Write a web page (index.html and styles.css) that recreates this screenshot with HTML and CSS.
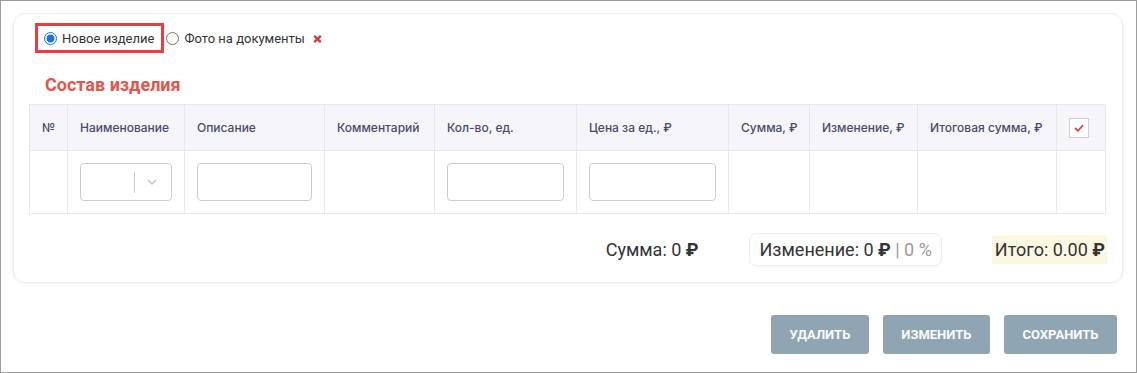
FILE: index.html
```html
<!DOCTYPE html>
<html lang="ru">
<head>
<meta charset="utf-8">
<link rel="stylesheet" href="styles.css">
</head>
<body>
<div class="frame">
  <div class="card">
    <div class="radios">
      <label class="radio radio-active"><input type="radio" name="kind" checked><span>Новое изделие</span></label>
      <label class="radio"><input type="radio" name="kind"><span>Фото на документы</span></label>
      <svg class="remove" width="9" height="8" viewBox="0 0 9 8"><path d="M1.2 0.8 L7.8 7.2 M7.8 0.8 L1.2 7.2" stroke="#d9363e" stroke-width="2.3" stroke-linecap="butt"/></svg>
    </div>
    <h2 class="title">Состав изделия</h2>
    <table class="grid">
      <colgroup>
        <col style="width:38px"><col style="width:117px"><col style="width:140px"><col style="width:110px"><col style="width:142px"><col style="width:152px"><col style="width:81px"><col style="width:108px"><col style="width:139px"><col style="width:49px">
      </colgroup>
      <thead>
        <tr>
          <th>№</th>
          <th>Наименование</th>
          <th>Описание</th>
          <th>Комментарий</th>
          <th>Кол-во, ед.</th>
          <th>Цена за ед., ₽</th>
          <th>Сумма, ₽</th>
          <th>Изменение, ₽</th>
          <th>Итоговая сумма, ₽</th>
          <th><span class="check"><svg width="10" height="8" viewBox="0 0 10 8"><path d="M1 4 L4 6.8 L9 1.2" fill="none" stroke="#e0474c" stroke-width="1.8"/></svg></span></th>
        </tr>
      </thead>
      <tbody>
        <tr>
          <td></td>
          <td><div class="select"><span class="sel-value"></span><span class="sel-sep"></span><svg class="sel-arrow" width="10" height="6" viewBox="0 0 10 6"><path d="M1 1 L5 5 L9 1" fill="none" stroke="#c8c8c8" stroke-width="1.6"/></svg></div></td>
          <td><input class="field" type="text"></td>
          <td></td>
          <td><input class="field" type="text"></td>
          <td><input class="field" type="text"></td>
          <td></td>
          <td></td>
          <td></td>
          <td></td>
        </tr>
      </tbody>
    </table>
    <div class="totals">
      <div class="sum">Сумма: 0 <b>₽</b></div>
      <div class="change">Изменение: 0 <b>₽</b> <span class="muted">| 0 %</span></div>
      <div class="total">Итого: 0.00 <b>₽</b></div>
    </div>
  </div>
  <div class="actions">
    <button class="btn">Удалить</button>
    <button class="btn">Изменить</button>
    <button class="btn">Сохранить</button>
  </div>
</div>
</body>
</html>
```
FILE: styles.css
```css
* { box-sizing: border-box; }
html, body { margin: 0; padding: 0; background: #fff; }
body { font-family: Roboto, "Liberation Sans", sans-serif; color: #333; }

.frame {
  width: 1137px;
  height: 373px;
  border: 1px solid #9d9d9d;
  padding: 12px 13px 0 12px;
}

.card {
  border: 1px solid #ececf1;
  border-radius: 12px;
  box-shadow: 0 1px 3px rgba(30, 30, 60, 0.05);
  padding: 9px 16px 16px 15px;
}

.radios {
  display: flex;
  align-items: center;
  margin-left: 6px;
  height: 30px;
}
.radio {
  display: flex;
  align-items: center;
  font-size: 13px;
  color: #333;
  height: 30px;
  border: 2px solid transparent;
  padding: 0 8px 0 0;
}
.radio input {
  margin: 0 5px 0 0;
  width: 13px;
  height: 13px;
  accent-color: #1a73e8;
}
.radio-active {
  border: 3px solid #ef3b40;
  padding: 0 7px 0 6px;
}
.radio:not(.radio-active) { padding-left: 0; }
.remove { margin-left: -2px; margin-top: 1px; }

.title {
  margin: 22px 0 0 16px;
  height: 29px;
  font-size: 18px;
  font-weight: 700;
  color: #e4564b;
  line-height: 20px;
}

.grid {
  border-collapse: collapse;
  table-layout: fixed;
  width: 1077px;
  font-family: Inter, Roboto, sans-serif;
}
.grid th, .grid td {
  border: 1px solid #e7e7ee;
  padding: 0 12px;
  text-align: left;
}
.grid th {
  background: #f6f6fa;
  height: 46px;
  font-size: 12px;
  font-weight: 500;
  color: #4a4a66;
  white-space: nowrap;
}
.grid td { height: 63px; }

.check {
  display: flex;
  align-items: center;
  justify-content: center;
  width: 20px;
  height: 20px;
  border: 1px solid #cfcfd4;
  background: #fff;
}

.select {
  display: flex;
  align-items: center;
  width: 100%;
  height: 38px;
  border: 1px solid #cccccc;
  border-radius: 4px;
  background: #fff;
}
.sel-value { flex: 1; }
.sel-sep { width: 1px; height: 21px; background: #cccccc; margin-right: 12px; }
.sel-arrow { margin-right: 14px; }

.field {
  display: block;
  width: 100%;
  height: 38px;
  border: 1px solid #cccccc;
  border-radius: 4px;
  background: #fff;
  outline: none;
}

.totals {
  display: flex;
  justify-content: flex-end;
  align-items: center;
  gap: 50px;
  margin-top: 19px;
  font-size: 18px;
  color: #333;
}
.totals b { font-weight: 700; }
.change {
  height: 33px;
  line-height: 31px;
  padding: 0 9px 0 10px;
  border: 1px solid #ececf1;
  border-radius: 8px;
  box-shadow: 0 1px 2px rgba(30, 30, 60, 0.04);
}
.muted { color: #9a9a9a; }
.total {
  background: #fbf8e2;
  height: 29px;
  line-height: 29px;
  padding: 0 2px 0 3px;
  margin-right: -1px;
}

.actions {
  display: flex;
  justify-content: flex-end;
  gap: 14px;
  margin-top: 32px;
  padding-right: 6px;
}
.btn {
  height: 39px;
  padding: 0 18.5px;
  border: none;
  border-radius: 3px;
  background: #8fa5b3;
  color: #fbfcfd;
  font-family: Roboto, sans-serif;
  font-size: 13px;
  font-weight: 700;
  text-transform: uppercase;
}
```
